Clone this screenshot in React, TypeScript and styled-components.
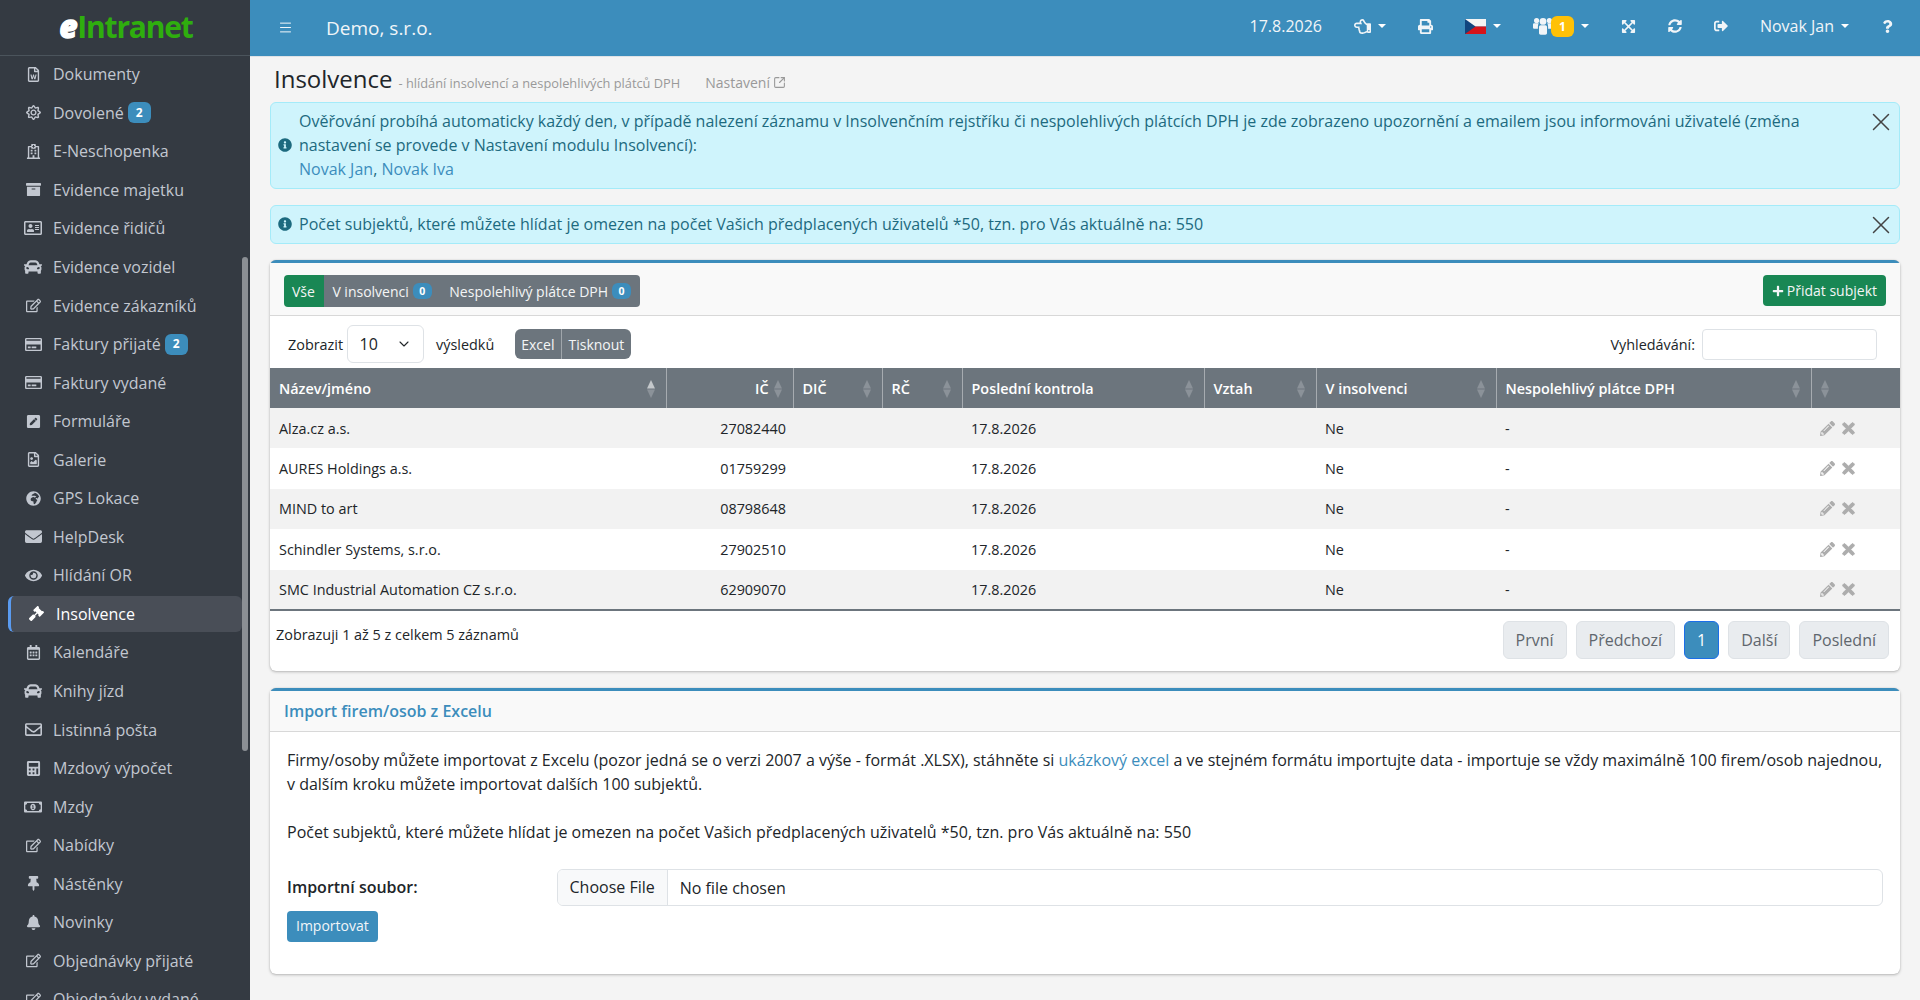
import React from "react";
import styled, { createGlobalStyle } from "styled-components";
import { ChevronDown, Menu, SquareArrowOutUpRight, X } from "lucide-react";
import {
  FaArchive,
  FaBell,
  FaCalculator,
  FaCar,
  FaEnvelope,
  FaExpandArrowsAlt,
  FaEye,
  FaGavel,
  FaGlobeAfrica,
  FaInfoCircle,
  FaPenSquare,
  FaPencilAlt,
  FaPlus,
  FaPrint,
  FaQuestion,
  FaRegAddressCard,
  FaRegCalendarAlt,
  FaRegCreditCard,
  FaRegEdit,
  FaRegEnvelope,
  FaRegFileImage,
  FaRegFileWord,
  FaRegHandPointLeft,
  FaRegHospital,
  FaRegMoneyBillAlt,
  FaRegSun,
  FaSignOutAlt,
  FaSyncAlt,
  FaThumbtack,
  FaTimes,
} from "react-icons/fa";

const GlobalStyle = createGlobalStyle`
  html, body {
    margin: 0;
    height: 100%;
    overflow: hidden;
    background: #f4f4f4;
    font-family: "Open Sans", "Liberation Sans", sans-serif;
    font-size: 16px;
    color: #212529;
  }
  * {
    box-sizing: border-box;
  }
`;

const Layout = styled.div`
  display: flex;
  height: 1000px;
`;

const Sidebar = styled.aside`
  position: relative;
  width: 250px;
  flex-shrink: 0;
  height: 1000px;
  overflow: hidden;
  background: #343a42;
`;

const Brand = styled.div`
  height: 56px;
  display: flex;
  align-items: center;
  justify-content: center;
  padding-left: 2px;
  border-bottom: 1px solid #4b545c;
`;

const BrandE = styled.span`
  color: #fff;
  font-size: 31px;
  line-height: 1;
  font-weight: 800;
  font-style: italic;
  margin-top: -3px;
  -webkit-text-stroke: 1.5px #fff;
`;

const BrandName = styled.span`
  color: #2fae0e;
  font-size: 30px;
  line-height: 1;
  font-weight: 700;
  margin-top: -2px;
  letter-spacing: -1.2px;
`;

const SideList = styled.nav`
  display: flex;
  flex-direction: column;
  margin-top: -1px;
`;

const SideItem = styled.a<{ $active?: boolean }>`
  flex-shrink: 0;
  display: flex;
  align-items: center;
  margin: ${(p) => (p.$active ? "1.275px 8px" : "0")};
  height: ${(p) => (p.$active ? "36px" : "38.55px")};
  padding-left: ${(p) => (p.$active ? "13px" : "21px")};
  color: ${(p) => (p.$active ? "#fff" : "#c2c7d0")};
  background: ${(p) => (p.$active ? "#494e57" : "transparent")};
  border-left: ${(p) => (p.$active ? "3px solid #5a9bf0" : "0")};
  border-radius: ${(p) => (p.$active ? "6px" : "0")};
  font-size: 16px;
`;

const SideIcon = styled.span`
  width: 24px;
  display: flex;
  justify-content: center;
  margin-right: 8px;
  font-size: 15px;
`;

const Badge = styled.span<{ $warning?: boolean }>`
  display: inline-block;
  background: ${(p) => (p.$warning ? "#ffc107" : "#3c8dbc")};
  color: #fff;
  font-size: 12px;
  font-weight: 700;
  line-height: 1;
  padding: 4.5px 8px;
  border-radius: 6px;
`;

const SideBadge = styled(Badge)`
  margin-left: 4px;
`;

const SideScroll = styled.div`
  position: absolute;
  top: 257px;
  left: 242px;
  width: 6px;
  height: 494px;
  border-radius: 3px;
  background: #8b8f94;
`;

const Main = styled.main`
  flex: 1;
  min-width: 0;
  display: flex;
  flex-direction: column;
`;

const TopBar = styled.header`
  height: 57px;
  flex-shrink: 0;
  display: flex;
  align-items: center;
  background: #3c8dbc;
  border-bottom: 1px solid #dee2e6;
  color: #fff;
  padding: 0 26px 1px 28px;
`;

const MenuButton = styled.span`
  display: flex;
  margin-right: 33px;
`;

const Company = styled.span`
  font-size: 19px;
  color: #f1f5f8;
`;

const TopTools = styled.div`
  margin-left: auto;
  margin-bottom: 3px;
  display: flex;
  align-items: center;
  gap: 32px;
  font-size: 16px;
  color: #f1f5f8;
`;

const TopTool = styled.span`
  position: relative;
  display: flex;
  align-items: center;
`;

const Caret = styled.i`
  margin-left: 7px;
  border-top: 4px solid #fff;
  border-left: 4px solid transparent;
  border-right: 4px solid transparent;
`;

const TopBadge = styled(Badge)`
  margin-left: -2px;
  padding: 5px 8px;
  height: 21px;
`;

const Content = styled.div`
  flex: 1;
  padding: 0 20px;
`;

const TitleRow = styled.div`
  height: 45px;
  display: flex;
  align-items: baseline;
  padding: 4px 0 0 4px;
`;

const PageTitle = styled.h1`
  margin: 0;
  font-size: 24px;
  font-weight: 400;
  line-height: 36px;
`;

const PageSubtitle = styled.small`
  margin-left: 6px;
  font-size: 12.8px;
  color: #999;
`;

const SettingsLink = styled.a`
  display: inline-flex;
  align-items: center;
  gap: 3px;
  margin-left: 25px;
  font-size: 14px;
  color: #999;
`;

const Alert = styled.div`
  position: relative;
  display: flex;
  align-items: center;
  gap: 7px;
  background: #cff4fc;
  border: 1px solid #a4ebf9;
  border-radius: 6px;
  padding: 6px 70px 7px 7px;
  margin-bottom: 16px;
  color: #1d6a7f;
  line-height: 24px;
`;

const AlertLink = styled.a`
  color: #3c8dbc;
`;

const AlertClose = styled.span`
  position: absolute;
  top: 4px;
  right: 3px;
  display: flex;
  color: #444;
`;

const Card = styled.section`
  background: #fff;
  border-top: 3px solid #3c8dbc;
  border-radius: 6px;
  box-shadow: 0 0 1px rgba(0, 0, 0, 0.2), 0 1px 3px rgba(0, 0, 0, 0.25);
  margin-bottom: 17px;
`;

const CardHeader = styled.div`
  height: 53px;
  display: flex;
  align-items: flex-start;
  justify-content: space-between;
  padding: 12px 14px 0 14px;
  background: #f9f9f9;
  border-bottom: 1px solid #d8d8d8;
`;

const ButtonGroup = styled.div`
  display: flex;
  border-radius: 4px;
  overflow: hidden;
`;

const FilterButton = styled.span<{ $active?: boolean }>`
  display: flex;
  align-items: center;
  gap: 4px;
  height: 32px;
  padding: 0 9px 0 ${(p) => (p.$active ? "8px" : "8.5px")};
  font-size: 14px;
  color: #f4f5f6;
  background: ${(p) => (p.$active ? "#198754" : "#6c757d")};
`;

const SmallBadge = styled(Badge)`
  font-size: 10.5px;
  padding: 3px 6.5px;
`;

const AddButton = styled.span`
  display: flex;
  align-items: center;
  gap: 3px;
  height: 31px;
  padding: 0 9px 0 9px;
  font-size: 14px;
  border-radius: 4px;
  color: #f4f5f6;
  background: #198754;
`;

const Toolbar = styled.div`
  height: 52px;
  display: flex;
  align-items: center;
  justify-content: space-between;
  padding: 4px 23px 0 18px;
  font-size: 14.4px;
`;

const ToolbarLeft = styled.div`
  display: flex;
  align-items: center;
`;

const Select = styled.div`
  width: 77px;
  height: 38px;
  display: flex;
  align-items: center;
  justify-content: space-between;
  margin: 0 12.5px 0 3.5px;
  padding: 0 11px 0 12px;
  border: 1px solid #dee2e6;
  border-radius: 6px;
  font-size: 16px;
`;

const ExportGroup = styled.div`
  display: flex;
  margin-left: 20.5px;
  border-radius: 6px;
  overflow: hidden;
`;

const ExportButton = styled.span`
  height: 30px;
  display: flex;
  align-items: center;
  padding: 0 6.5px;
  font-size: 14px;
  color: #f4f5f6;
  background: #6c757d;
  & + & {
    border-left: 1px solid #a0a6ab;
  }
`;

const SearchLabel = styled.label`
  display: flex;
  align-items: center;
  gap: 7px;
`;

const SearchInput = styled.input`
  width: 175px;
  height: 31px;
  border: 1px solid #dee2e6;
  border-radius: 4px;
  outline: none;
`;

const Table = styled.table`
  width: 100%;
  table-layout: fixed;
  border-collapse: collapse;
  font-size: 14.4px;
  border-bottom: 2px solid #6c757d;
`;

const Th = styled.th<{ $width: number; $right?: boolean }>`
  position: relative;
  width: ${(p) => p.$width}px;
  height: 40px;
  padding: 0 24px 0 9px;
  background: #6c757d;
  color: #fff;
  font-weight: 600;
  text-align: ${(p) => (p.$right ? "right" : "left")};
  & + & {
    border-left: 1px solid #a6abb0;
  }
`;

const SortMark = styled.svg<{ $atStart?: boolean }>`
  position: absolute;
  ${(p) => (p.$atStart ? "left: 9px;" : "right: 11px;")}
  top: 12px;
`;

const Row = styled.tr<{ $odd: boolean }>`
  background: ${(p) => (p.$odd ? "#f2f2f2" : "#fff")};
  & + & td {
    border-top: 1px solid #dee2e6;
  }
`;

const Td = styled.td<{ $right?: boolean }>`
  height: 40.4px;
  padding: 0 7px 0 9px;
  text-align: ${(p) => (p.$right ? "right" : "left")};
`;

const RowActions = styled.span`
  display: flex;
  align-items: center;
  gap: 5px;
  color: #adadad;
`;

const TableFooter = styled.div`
  height: 60px;
  display: flex;
  justify-content: space-between;
  align-items: flex-start;
  padding: 10px 11px 0 6px;
  font-size: 14.4px;
`;

const Info = styled.span`
  margin-top: 4px;
`;

const Pager = styled.div`
  display: flex;
  gap: 9px;
`;

const PageButton = styled.span<{ $active?: boolean }>`
  height: 38px;
  display: flex;
  align-items: center;
  padding: 0 12px;
  font-size: 16px;
  border-radius: 6px;
  border: 1px solid ${(p) => (p.$active ? "#1b6ee8" : "#dee2e6")};
  background: ${(p) => (p.$active ? "#3c8dbc" : "#e9ecef")};
  color: ${(p) => (p.$active ? "#fff" : "#5f666d")};
`;

const ImportTitle = styled.div`
  height: 41px;
  display: flex;
  align-items: center;
  padding-left: 14px;
  background: #f9f9f9;
  border-bottom: 1px solid #d8d8d8;
  color: #3c8dbc;
  font-weight: 600;
  font-size: 16px;
`;

const ImportBody = styled.div`
  padding: 16px 17px 32px 17px;
  line-height: 24px;
`;

const Paragraph = styled.p`
  margin: 0 0 24px 0;
`;

const FileRow = styled.div`
  display: flex;
  align-items: center;
  margin-top: 25px;
`;

const FileLabel = styled.label`
  width: 269.5px;
  font-weight: 600;
`;

const FileInput = styled.input`
  flex: 1;
  height: 37px;
  border: 1px solid #dee2e6;
  border-radius: 6px;
  font-family: inherit;
  font-size: 16px;
  color: #212529;
  &::file-selector-button {
    height: 100%;
    margin: 0 12px 0 0;
    padding: 0 12px;
    border: 0;
    border-right: 1px solid #dee2e6;
    background: #f8f9fa;
    font-family: inherit;
    font-size: 16px;
    color: #212529;
  }
`;

const ImportButton = styled.span`
  display: inline-flex;
  align-items: center;
  height: 31px;
  margin-top: 5px;
  padding: 0 9px;
  border-radius: 4px;
  background: #3c8dbc;
  color: #f1f5f8;
  font-size: 14px;
`;

const sideItems = [
  { label: "Dokumenty", icon: <FaRegFileWord /> },
  { label: "Dovolené", icon: <FaRegSun />, badge: 2 },
  { label: "E-Neschopenka", icon: <FaRegHospital /> },
  { label: "Evidence majetku", icon: <FaArchive /> },
  { label: "Evidence řidičů", icon: <FaRegAddressCard size={18} /> },
  { label: "Evidence vozidel", icon: <FaCar size={18} /> },
  { label: "Evidence zákazníků", icon: <FaRegEdit /> },
  { label: "Faktury přijaté", icon: <FaRegCreditCard size={17} />, badge: 2 },
  { label: "Faktury vydané", icon: <FaRegCreditCard size={17} /> },
  { label: "Formuláře", icon: <FaPenSquare /> },
  { label: "Galerie", icon: <FaRegFileImage /> },
  { label: "GPS Lokace", icon: <FaGlobeAfrica /> },
  { label: "HelpDesk", icon: <FaEnvelope size={17} /> },
  { label: "Hlídání OR", icon: <FaEye size={17} /> },
  { label: "Insolvence", icon: <FaGavel />, active: true },
  { label: "Kalendáře", icon: <FaRegCalendarAlt /> },
  { label: "Knihy jízd", icon: <FaCar size={18} /> },
  { label: "Listinná pošta", icon: <FaRegEnvelope size={17} /> },
  { label: "Mzdový výpočet", icon: <FaCalculator /> },
  { label: "Mzdy", icon: <FaRegMoneyBillAlt size={18} /> },
  { label: "Nabídky", icon: <FaRegEdit /> },
  { label: "Nástěnky", icon: <FaThumbtack /> },
  { label: "Novinky", icon: <FaBell /> },
  { label: "Objednávky přijaté", icon: <FaRegEdit /> },
  { label: "Objednávky vydané", icon: <FaRegEdit /> },
];

const columns = [
  { label: "Název/jméno", width: 396, sorted: true },
  { label: "IČ", width: 127, right: true },
  { label: "DIČ", width: 89 },
  { label: "RČ", width: 80 },
  { label: "Poslední kontrola", width: 242 },
  { label: "Vztah", width: 112 },
  { label: "V insolvenci", width: 180 },
  { label: "Nespolehlivý plátce DPH", width: 315 },
  { label: "", width: 89, atStart: true },
];

const subjects = [
  { name: "Alza.cz a.s.", id: "27082440" },
  { name: "AURES Holdings a.s.", id: "01759299" },
  { name: "MIND to art", id: "08798648" },
  { name: "Schindler Systems, s.r.o.", id: "27902510" },
  { name: "SMC Industrial Automation CZ s.r.o.", id: "62909070" },
];

const Sort = ({ sorted, atStart }: { sorted?: boolean; atStart?: boolean }) => (
  <SortMark $atStart={atStart} width="8" height="18" viewBox="0 0 8 18">
    <path d="M4 0 8 8.5H0z" fill={sorted ? "#c4c8cb" : "#8b9299"} />
    <path d="M4 18 0 9.5h8z" fill="#8b9299" />
  </SortMark>
);

const CzechFlag = () => (
  <svg width="21" height="15" viewBox="0 0 21 15">
    <rect width="21" height="7.5" fill="#f4f4f4" />
    <rect y="7.5" width="21" height="7.5" fill="#d7141a" />
    <path d="M0 0 10.5 7.5 0 15z" fill="#11457e" />
  </svg>
);

// FontAwesome 4 style group icon, taller than the one in the package
const UsersIcon = () => (
  <svg width="20" height="18" viewBox="0 0 20 18" fill="currentColor">
    <circle cx="3.6" cy="3.6" r="2.6" />
    <circle cx="16.4" cy="3.6" r="2.6" />
    <path d="M0 7.5c0-.8.6-1.2 1.4-1.2h4.4c-.6 1-.9 2-.9 3.2v2.2H1.4C.6 11.7 0 11.2 0 10.4zM20 7.5c0-.8-.6-1.2-1.4-1.2h-4.4c.6 1 .9 2 .9 3.2v2.2h3.5c.8 0 1.4-.5 1.4-1.3z" />
    <circle cx="10" cy="4.4" r="3.4" />
    <path d="M6 10c0-1 .7-1.7 1.7-1.7h4.6c1 0 1.7.7 1.7 1.7v6c0 1-.7 1.7-1.7 1.7H7.7C6.7 17.7 6 17 6 16z" />
  </svg>
);

const App = () => {
  return (
    <Layout>
      <GlobalStyle />
      <Sidebar>
        <Brand>
          <BrandE>e</BrandE>
          <BrandName>Intranet</BrandName>
        </Brand>
        <SideList>
          {sideItems.map((item) => (
            <SideItem key={item.label} $active={item.active}>
              <SideIcon>{item.icon}</SideIcon>
              {item.label}
              {item.badge && <SideBadge>{item.badge}</SideBadge>}
            </SideItem>
          ))}
        </SideList>
        <SideScroll />
      </Sidebar>
      <Main>
        <TopBar>
          <MenuButton>
            <Menu size={15} strokeWidth={1.5} />
          </MenuButton>
          <Company>Demo, s.r.o.</Company>
          <TopTools>
            <TopTool>17.8.2026</TopTool>
            <TopTool>
              <FaRegHandPointLeft size={17} />
              <Caret />
            </TopTool>
            <TopTool>
              <FaPrint size={15} />
            </TopTool>
            <TopTool>
              <CzechFlag />
              <Caret />
            </TopTool>
            <TopTool>
              <UsersIcon />
              <TopBadge $warning>1</TopBadge>
              <Caret />
            </TopTool>
            <TopTool>
              <FaExpandArrowsAlt size={15} />
            </TopTool>
            <TopTool>
              <FaSyncAlt size={14} />
            </TopTool>
            <TopTool>
              <FaSignOutAlt size={14} />
            </TopTool>
            <TopTool>
              Novak Jan
              <Caret />
            </TopTool>
            <TopTool>
              <FaQuestion size={13} />
            </TopTool>
          </TopTools>
        </TopBar>
        <Content>
          <TitleRow>
            <PageTitle>Insolvence</PageTitle>
            <PageSubtitle>- hlídání insolvencí a nespolehlivých plátců DPH</PageSubtitle>
            <SettingsLink>
              Nastavení <SquareArrowOutUpRight size={13} />
            </SettingsLink>
          </TitleRow>
          <Alert>
            <FaInfoCircle size={14} style={{ flexShrink: 0 }} />
            <div>
              Ověřování probíhá automaticky každý den, v případě nalezení záznamu v Insolvenčním rejstříku či
              nespolehlivých plátcích DPH je zde zobrazeno upozornění a emailem jsou informováni uživatelé (změna
              nastavení se provede v Nastavení modulu Insolvencí):
              <br />
              <AlertLink>Novak Jan</AlertLink>, <AlertLink>Novak Iva</AlertLink>
            </div>
            <AlertClose>
              <X size={30} strokeWidth={1.2} />
            </AlertClose>
          </Alert>
          <Alert>
            <FaInfoCircle size={14} style={{ flexShrink: 0 }} />
            <div>Počet subjektů, které můžete hlídat je omezen na počet Vašich předplacených uživatelů *50, tzn. pro Vás aktuálně na: 550</div>
            <AlertClose>
              <X size={30} strokeWidth={1.2} />
            </AlertClose>
          </Alert>
          <Card>
            <CardHeader>
              <ButtonGroup>
                <FilterButton $active>Vše</FilterButton>
                <FilterButton>
                  V insolvenci <SmallBadge>0</SmallBadge>
                </FilterButton>
                <FilterButton>
                  Nespolehlivý plátce DPH <SmallBadge>0</SmallBadge>
                </FilterButton>
              </ButtonGroup>
              <AddButton>
                <FaPlus size={12} /> Přidat subjekt
              </AddButton>
            </CardHeader>
            <Toolbar>
              <ToolbarLeft>
                Zobrazit
                <Select>
                  10 <ChevronDown size={16} strokeWidth={1.6} />
                </Select>
                výsledků
                <ExportGroup>
                  <ExportButton>Excel</ExportButton>
                  <ExportButton>Tisknout</ExportButton>
                </ExportGroup>
              </ToolbarLeft>
              <SearchLabel>
                Vyhledávání:
                <SearchInput />
              </SearchLabel>
            </Toolbar>
            <Table>
              <thead>
                <tr>
                  {columns.map((col) => (
                    <Th key={col.label} $width={col.width} $right={col.right}>
                      {col.label}
                      <Sort sorted={col.sorted} atStart={col.atStart} />
                    </Th>
                  ))}
                </tr>
              </thead>
              <tbody>
                {subjects.map((s, i) => (
                  <Row key={s.id} $odd={i % 2 === 0}>
                    <Td>{s.name}</Td>
                    <Td $right>{s.id}</Td>
                    <Td />
                    <Td />
                    <Td>17.8.2026</Td>
                    <Td />
                    <Td>Ne</Td>
                    <Td>-</Td>
                    <Td>
                      <RowActions>
                        <FaPencilAlt size={15} />
                        <FaTimes size={17} stroke="currentColor" strokeWidth={30} />
                      </RowActions>
                    </Td>
                  </Row>
                ))}
              </tbody>
            </Table>
            <TableFooter>
              <Info>Zobrazuji 1 až 5 z celkem 5 záznamů</Info>
              <Pager>
                <PageButton>První</PageButton>
                <PageButton>Předchozí</PageButton>
                <PageButton $active>1</PageButton>
                <PageButton>Další</PageButton>
                <PageButton>Poslední</PageButton>
              </Pager>
            </TableFooter>
          </Card>
          <Card>
            <ImportTitle>Import firem/osob z Excelu</ImportTitle>
            <ImportBody>
              <Paragraph>
                Firmy/osoby můžete importovat z Excelu (pozor jedná se o verzi 2007 a výše - formát .XLSX), stáhněte si{" "}
                <AlertLink>ukázkový excel</AlertLink> a ve stejném formátu importujte data - importuje se vždy maximálně
                100 firem/osob najednou, v dalším kroku můžete importovat dalších 100 subjektů.
              </Paragraph>
              <div>Počet subjektů, které můžete hlídat je omezen na počet Vašich předplacených uživatelů *50, tzn. pro Vás aktuálně na: 550</div>
              <FileRow>
                <FileLabel>Importní soubor:</FileLabel>
                <FileInput type="file" />
              </FileRow>
              <ImportButton>Importovat</ImportButton>
            </ImportBody>
          </Card>
        </Content>
      </Main>
    </Layout>
  );
};

export default App;
